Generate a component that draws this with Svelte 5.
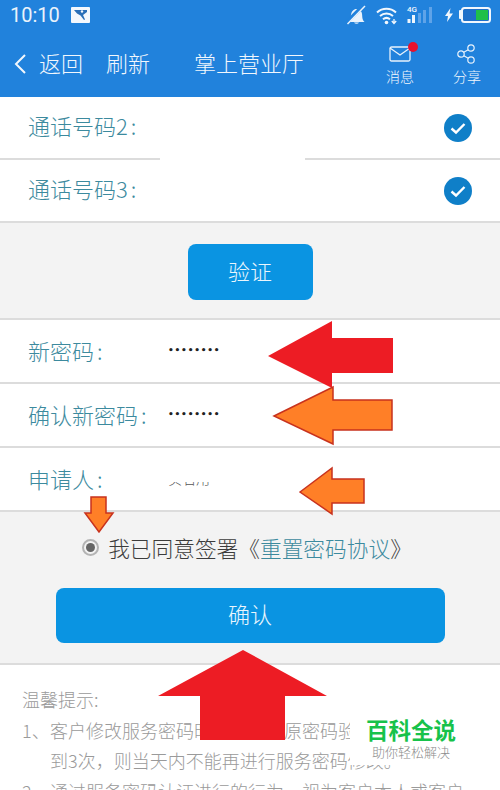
<script>
  const phones = ['通话号码2', '通话号码3'];
  const fields = [
    { label: '新密码', kind: 'dots' },
    { label: '确认新密码', kind: 'dots' },
    { label: '申请人', kind: 'masked' }
  ];
  const tips = [
    { n: '1、', text: '客户修改服务密码时，需通过原密码验证，错误累计到3次，则当天内不能再进行服务密码修改。' },
    { n: '2、', text: '通过服务密码认证进行的行为，视为客户本人或客户授权的行为。' }
  ];
</script>

<div class="screen">
  <header class="top">
    <div class="status">
      <span class="time">10:10</span>
      <svg class="pic" width="19" height="16" viewBox="0 0 19 16">
        <rect width="19" height="16" rx="1" fill="#f4f8fd" />
        <path d="M3 3h13v2l-4 3 2 4.500-1 .5-3.500-4.500L6 6.500z" fill="#2a6fb8" />
        <circle cx="11" cy="4.500" r="1.200" fill="#f4f8fd" />
      </svg>
      <span class="grow"></span>
      <svg width="20" height="20" viewBox="0 0 20 20">
        <path d="M2 17c2-2 2.500-4 3-7 .5-3.500 2.500-6 5.500-6 2.500 0 4 1.200 5 3 1 2.500.5 4.500 1 6.500.3 1.500 1 2.500 2 3.500z" fill="#eaf3fc" />
        <path d="M8 17.500a2.800 2.300 0 0 0 5 0z" fill="#eaf3fc" />
        <path d="M0 18 18 0" stroke="#2182dc" stroke-width="4" />
        <path d="M1.500 19 19 1" stroke="#eaf3fc" stroke-width="1.500" />
      </svg>
      <svg class="wifi" width="22" height="19" viewBox="0 0 22 19">
        <g fill="none" stroke="#f2f7fd" stroke-width="2">
          <path d="M1 6.500a14 14 0 0 1 19 0" />
          <path d="M4 10a10 10 0 0 1 13 0" />
          <path d="M7 13.300a5.500 5.500 0 0 1 7 0" />
        </g>
        <circle cx="10.500" cy="16.500" r="1.800" fill="#f2f7fd" />
        <path d="M18 13v3.500M15.800 15l2.200 2.500 2.200-2.500" fill="none" stroke="#f2f7fd" stroke-width="1.300" />
      </svg>
      <div class="signal">
        <span class="g4">4G</span>
        <svg width="26" height="24" viewBox="0 0 26 24">
          <rect x="0.500" y="16" width="3" height="4" fill="#eef5fc" />
          <rect x="5" y="12" width="3" height="8" fill="#eef5fc" />
          <rect x="11" y="10" width="3" height="10" fill="#5fa3e8" />
          <rect x="16" y="7" width="3" height="13" fill="#5fa3e8" />
          <rect x="22" y="4" width="3" height="16" fill="#5fa3e8" />
        </svg>
      </div>
      <svg class="bolt" width="8" height="14" viewBox="0 0 8 14">
        <path d="M5.500 0 0 8h3L2 14l6-8.500H4.500z" fill="#f2f7fd" />
      </svg>
      <svg class="batt" width="32" height="16" viewBox="0 0 32 16">
        <rect x="0" y="3" width="2.500" height="9" rx="1" fill="#f2f7fd" />
        <rect x="3" y="1" width="28" height="14" rx="2.500" fill="#1f70c9" stroke="#f2f7fd" stroke-width="2" />
        <rect x="17" y="3" width="12" height="10" fill="#1fc04a" />
      </svg>
    </div>

    <nav class="bar">
      <svg class="back" width="14" height="22" viewBox="0 0 14 22">
        <path d="M12 2 3 11l9 9" fill="none" stroke="#f2f7fd" stroke-width="2" />
      </svg>
      <span class="nav-link">返回</span>
      <span class="nav-link refresh">刷新</span>
      <span class="title">掌上营业厅</span>
      <span class="grow"></span>
      <div class="tool msg">
        <span class="tool-icon">
          <svg width="22" height="16" viewBox="0 0 22 16">
            <rect x="1" y="1" width="20" height="14" rx="1.500" fill="none" stroke="#e8f2fc" stroke-width="1.300" />
            <path d="m1 2 10 7 10-7" fill="none" stroke="#e8f2fc" stroke-width="1.300" />
          </svg>
          <i class="dot"></i>
        </span>
        <span>消息</span>
      </div>
      <div class="tool">
        <span class="tool-icon">
          <svg width="20" height="20" viewBox="0 0 20 20">
            <g fill="none" stroke="#e8f2fc" stroke-width="1.200">
              <circle cx="14" cy="4" r="3.200" />
              <circle cx="4" cy="10" r="3.200" />
              <circle cx="14" cy="16" r="3.200" />
              <path d="M11.200 5.700 6.800 8.300M6.800 11.700l4.400 2.600" />
            </g>
          </svg>
        </span>
        <span>分享</span>
      </div>
    </nav>
  </header>

  <section class="rows">
    {#each phones as label, i}
      <div class="row phone">
        <span class="label">{label}<span class="colon">:</span></span>
        <svg class="check" width="28" height="28" viewBox="0 0 28 28">
          <circle cx="14" cy="14" r="14" fill="#0f7fc8" />
          <path d="m7.500 14.500 4.500 4 8.500-8.500" fill="none" stroke="#fff" stroke-width="2.400" />
        </svg>
        {#if i === 0}<i class="smudge"></i>{/if}
      </div>
    {/each}
  </section>

  <section class="verify">
    <button class="btn small">验证</button>
  </section>

  <section class="rows form">
    {#each fields as f}
      <div class="row field">
        <span class="label wide">{f.label}<span class="colon">:</span></span>
        {#if f.kind === 'dots'}
          <span class="dots">••••••••</span>
        {:else}
          <span class="masked"><span>实名用户</span></span>
        {/if}
      </div>
    {/each}
  </section>

  <section class="agree">
    <div class="agree-line">
      <span class="radio"><i></i></span>
      <span>我已同意签署《<span class="link">重置密码协议</span>》</span>
    </div>
    <button class="btn large">确认</button>
  </section>

  <section class="tips">
    <p class="tips-head">温馨提示:</p>
    {#each tips as tip}
      <div class="tip"><span class="tip-n">{tip.n}</span><span>{tip.text}</span></div>
    {/each}
  </section>

  <div class="brand">
    <strong>百科全说</strong>
    <span>助你轻松解决</span>
  </div>

  <!-- annotation arrows drawn over the screenshot -->
  <svg class="arrows" width="500" height="790" viewBox="0 0 500 790">
    <path d="M268 356 332 321V338H393V373H332V388Z" fill="#ed1c24" />
    <path d="M274 416 333 387V400H392V430H333V444Z" fill="#ff7f27" stroke="#c8321e" stroke-width="1.500" />
    <path d="M300 492 332 468V479H364V503H332V514Z" fill="#ff7f27" stroke="#c8321e" stroke-width="1.500" />
    <path d="M91 497H106V513H113L99 532 85 513H91Z" fill="#ff7f27" stroke="#c8321e" stroke-width="1.500" />
    <path d="M243 650 327 696H285V740H200V696H158Z" fill="#ed1c24" />
  </svg>
</div>

<style>
  :global(body) {
    margin: 0;
  }
  .screen {
    position: relative;
    width: 500px;
    height: 790px;
    overflow: hidden;
    background: #f3f3f3;
    font-family: "Noto Sans CJK SC", "Noto Sans", sans-serif;
    font-weight: 300;
    text-spacing-trim: space-all;
  }
  .grow { flex: 1; }

  /* ── Header ── */
  .top {
    height: 97px;
    background: #2182dc;
    color: #f2f7fd;
  }
  .status {
    display: flex;
    align-items: center;
    height: 30px;
    padding: 0 9px 0 10px;
  }
  .time {
    font-family: Roboto, sans-serif;
    font-size: 20px;
    font-weight: 400;
    color: #e9f2fb;
  }
  .pic { margin-left: 11px; }
  .wifi { margin-left: 10px; }
  .signal {
    position: relative;
    margin-left: 9px;
    width: 26px;
    height: 24px;
  }
  .g4 {
    position: absolute;
    left: 0;
    top: 3px;
    font-family: Roboto, sans-serif;
    font-size: 8px;
    font-weight: 500;
    line-height: 8px;
  }
  .bolt { margin-left: 12px; }
  .batt { margin-left: 6px; }

  .bar {
    display: flex;
    align-items: center;
    height: 67px;
  }
  .back { margin-left: 13px; }
  .nav-link {
    margin-left: 12px;
    font-size: 22px;
    line-height: 30px;
    padding-bottom: 4px;
  }
  .nav-link.refresh { margin-left: 23px; }
  .title {
    margin-left: 44px;
    font-size: 22px;
    line-height: 30px;
    padding-bottom: 4px;
  }
  .tool {
    display: flex;
    flex-direction: column;
    align-items: center;
    gap: 1px;
    width: 28px;
    margin-right: 19px;
    font-size: 14px;
    line-height: 19px;
  }
  .tool.msg { margin-right: 39px; }
  .tool-icon {
    position: relative;
    display: flex;
    align-items: center;
    height: 24px;
  }
  .dot {
    position: absolute;
    right: -7px;
    top: 0;
    width: 10px;
    height: 10px;
    border-radius: 50%;
    background: #e8112d;
  }

  /* ── Rows ── */
  .row {
    position: relative;
    display: flex;
    align-items: center;
    background: #fff;
    border-bottom: 2px solid #dcdcdc;
    box-sizing: border-box;
    padding: 0 28px;
  }
  .phone {
    justify-content: space-between;
    height: 63px;
  }
  .phone .label { margin-top: -5px; }
  .label {
    font-size: 22px;
    color: #3c8a9e;
    line-height: 30px;
    margin-top: -2px;
  }
  .label.wide { width: 140px; }
  .colon { margin-left: 3px; }
  .smudge {
    position: absolute;
    left: 160px;
    bottom: -2px;
    width: 145px;
    height: 2px;
    background: #fff;
  }
  .check { flex: none; }

  .verify {
    display: flex;
    justify-content: center;
    height: 97px;
    padding-top: 21px;
    box-sizing: border-box;
  }
  .btn {
    border: none;
    background: #0a94e2;
    color: #eaf6fd;
    font-family: inherit;
    font-weight: 300;
    font-size: 22px;
    padding: 0 0 5px;
  }
  .btn.small {
    width: 125px;
    height: 56px;
    border-radius: 8px;
  }
  .btn.large {
    width: 389px;
    height: 55px;
    border-radius: 8px;
  }

  .form { border-top: 2px solid #dcdcdc; margin-top: -2px; }
  .field { height: 64px; }
  .dots {
    font-family: "DejaVu Sans", sans-serif;
    font-size: 9px;
    font-weight: 700;
    letter-spacing: 0.800px;
    line-height: 10px;
    color: #222;
    margin-top: -2px;
  }
  .masked {
    display: block;
    height: 4px;
    width: 54px;
    overflow: hidden;
    margin-top: 10px;
  }
  .masked span {
    display: block;
    margin-top: -14px;
    font-size: 14px;
    line-height: 20px;
    color: #555;
  }

  /* ── Agreement ── */
  .agree {
    display: flex;
    flex-direction: column;
    align-items: center;
    height: 153px;
    border-bottom: 2px solid #dcdcdc;
    box-sizing: border-box;
  }
  .agree-line {
    display: flex;
    align-items: center;
    gap: 9px;
    height: 30px;
    margin-top: 20px;
    margin-bottom: 26px;
    margin-left: -6px;
    font-size: 21.700px;
    color: #3c3c3c;
    white-space: nowrap;
  }
  .link { color: #3c8a9e; }
  .radio {
    display: flex;
    align-items: center;
    justify-content: center;
    width: 17px;
    height: 17px;
    box-sizing: border-box;
    border: 2px solid #b4b4b4;
    border-radius: 50%;
    background: #f3f3f3;
  }
  .radio i {
    width: 9px;
    height: 9px;
    border-radius: 50%;
    background: #666;
  }

  /* ── Tips ── */
  .tips {
    background: #fff;
    padding: 19px 22px 0;
    height: 140px;
    box-sizing: border-box;
    color: #9a9a9a;
    font-size: 18px;
    line-height: 30.700px;
  }
  .tips-head { margin: 0; }
  .tip { display: flex; }
  .tip-n {
    flex: none;
    width: 28px;
  }

  .brand {
    position: absolute;
    left: 350px;
    top: 712px;
    width: 150px;
    height: 53px;
    box-sizing: border-box;
    padding: 2px 0 0 16px;
    display: flex;
    flex-direction: column;
    background: #fff;
  }
  .brand strong {
    font-size: 22.500px;
    font-weight: 700;
    color: #17c24a;
    line-height: 30px;
  }
  .brand span {
    margin-left: 6px;
    font-size: 13px;
    line-height: 16px;
    color: #8c8c8c;
  }

  .arrows {
    position: absolute;
    left: 0;
    top: 0;
    pointer-events: none;
  }
</style>
